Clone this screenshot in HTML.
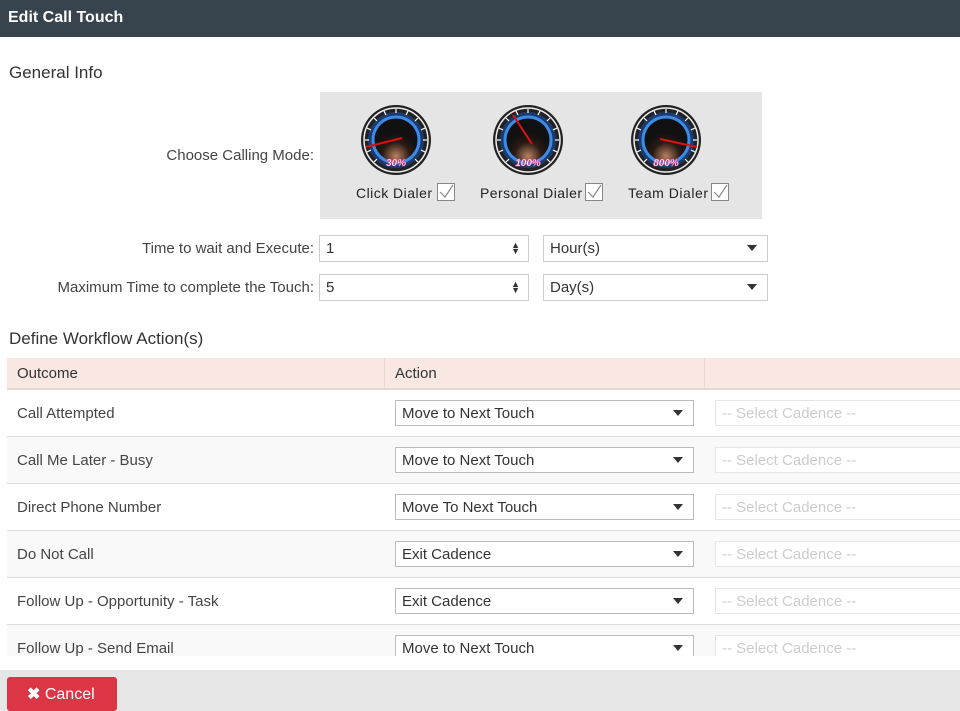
<!DOCTYPE html>
<html><head><meta charset="utf-8"><style>
*{margin:0;padding:0;box-sizing:border-box}
body{width:960px;height:711px;overflow:hidden;background:#fff;font-family:"Liberation Sans",sans-serif;color:#333;position:relative}
.a{position:absolute}
.hdr{left:0;top:0;width:960px;height:37px;background:#37444d;color:#fff;font-weight:bold;font-size:16px;padding:9px 8px}
.h{font-size:17px;color:#333}
.lbl{font-size:15px;color:#444;text-align:right}
.inp{border:1px solid #ccc;height:27px;font-size:15px;padding:4px 6px;background:#fff}
.arr{position:absolute;right:10px;top:9px;width:0;height:0;border-left:5px solid transparent;border-right:5px solid transparent;border-top:6px solid #333}
.spin{position:absolute;right:8px;top:6px;font-size:9px;line-height:6px;color:#333}
.row{position:absolute;left:7px;width:953px;height:47px;border-bottom:1px solid #ddd;font-size:15px;color:#444}
.row .t{position:absolute;left:10px;top:15px}
.sel{position:absolute;left:388px;top:10px;width:299px;height:26px;border:1px solid #bbb;background:#fff;padding:4px 6px;font-size:15px;color:#333}
.cad{position:absolute;left:708px;top:10px;width:250px;height:26px;border:1px solid #e6e6e6;background:#fff;padding:4px 6px;font-size:15px;color:#ccc}
</style></head><body>
<div class="a hdr">Edit Call Touch</div>
<div class="a h" style="left:9px;top:63px">General Info</div>
<div class="a lbl" style="left:0;width:314px;top:147px">Choose Calling Mode:</div>
<div class="a" style="left:320px;top:92px;width:442px;height:127px;background:#e5e5e5"></div>
<svg class="a" style="left:320px;top:92px" width="442" height="127">
<defs><radialGradient id="g" cx="50%" cy="85%" r="50%"><stop offset="0" stop-color="#b88060"/><stop offset="0.6" stop-color="#2a1a14"/><stop offset="1" stop-color="#111"/></radialGradient></defs>
<g id="gg" transform="translate(76,48)">
<circle r="35" fill="#222"/><circle r="32" fill="none" stroke="#eee" stroke-width="1.5"/>
<circle r="28" fill="#1c3a6e"/><circle r="23" fill="url(#g)" stroke="#3b8ce8" stroke-width="3"/>
<g stroke="#fff" stroke-width="1.2"><line x1="0" y1="-31" x2="0" y2="-27"/><line x1="22" y1="-22" x2="19" y2="-19"/><line x1="-22" y1="-22" x2="-19" y2="-19"/><line x1="31" y1="0" x2="27" y2="0"/><line x1="-31" y1="0" x2="-27" y2="0"/><line x1="22" y1="22" x2="19" y2="19"/><line x1="-22" y1="22" x2="-19" y2="19"/><line x1="12" y1="-29" x2="10" y2="-25"/><line x1="-12" y1="-29" x2="-10" y2="-25"/><line x1="29" y1="-12" x2="25" y2="-10"/><line x1="-29" y1="-12" x2="-25" y2="-10"/><line x1="29" y1="12" x2="25" y2="10"/><line x1="-29" y1="12" x2="-25" y2="10"/></g>
</g>
<use href="#gg" x="132"/><use href="#gg" x="270"/>
<line x1="82" y1="46" x2="46" y2="55" stroke="#e01010" stroke-width="2"/>
<line x1="212" y1="52" x2="193" y2="23" stroke="#e01010" stroke-width="2"/>
<line x1="340" y1="47" x2="377" y2="55" stroke="#e01010" stroke-width="2"/>
<g font-size="10" font-weight="bold" font-style="italic" fill="#fff" stroke="#ff4090" stroke-width="0.4" text-anchor="middle" font-family="Liberation Sans,sans-serif">
<text x="76" y="74">30%</text><text x="208" y="74">100%</text><text x="346" y="74">800%</text></g>
<g font-size="14" fill="#222" font-family="Liberation Sans,sans-serif"><text x="36" y="106" textLength="76">Click Dialer</text><text x="160" y="106" textLength="102">Personal Dialer</text><text x="308" y="106" textLength="80">Team Dialer</text></g>
<g fill="#fff" stroke="#888"><rect x="117.5" y="91.5" width="17" height="17"/><rect x="265.5" y="91.5" width="17" height="17"/><rect x="391.5" y="91.5" width="17" height="17"/></g>
<g fill="none" stroke="#888" stroke-width="1.2"><path d="M120 100l5 5 8-12"/><path d="M268 100l5 5 8-12"/><path d="M394 100l5 5 8-12"/></g>
</svg>
<div class="a lbl" style="left:0;width:314px;top:240px">Time to wait and Execute:</div>
<div class="a lbl" style="left:0;width:314px;top:279px">Maximum Time to complete the Touch:</div>
<div class="a inp" style="left:319px;top:235px;width:210px">1<span class="spin">▲<br>▼</span></div>
<div class="a inp" style="left:543px;top:235px;width:225px">Hour(s)<span class="arr"></span></div>
<div class="a inp" style="left:319px;top:274px;width:210px">5<span class="spin">▲<br>▼</span></div>
<div class="a inp" style="left:543px;top:274px;width:225px">Day(s)<span class="arr"></span></div>
<div class="a h" style="left:9px;top:329px">Define Workflow Action(s)</div>
<div class="a" style="left:7px;top:358px;width:953px;height:32px;background:#f8e8e1;border-bottom:2px solid #e2d8d3;font-size:15px;color:#333">
<span class="a" style="left:10px;top:7px">Outcome</span><span class="a" style="left:377px;top:0;height:30px;border-left:1px solid #e6dad4"></span><span class="a" style="left:388px;top:7px">Action</span><span class="a" style="left:697px;top:0;height:30px;border-left:1px solid #e6dad4"></span></div>
<div class="a" style="left:0;top:390px;width:960px;height:266px;overflow:hidden">
<div class="row" style="top:0;background:#fff"><span class="t">Call Attempted</span><div class="sel">Move to Next Touch<span class="arr"></span></div><div class="cad">-- Select Cadence --</div></div>
<div class="row" style="top:47px;background:#f9f9f9"><span class="t">Call Me Later - Busy</span><div class="sel">Move to Next Touch<span class="arr"></span></div><div class="cad">-- Select Cadence --</div></div>
<div class="row" style="top:94px;background:#fff"><span class="t">Direct Phone Number</span><div class="sel">Move To Next Touch<span class="arr"></span></div><div class="cad">-- Select Cadence --</div></div>
<div class="row" style="top:141px;background:#f9f9f9"><span class="t">Do Not Call</span><div class="sel">Exit Cadence<span class="arr"></span></div><div class="cad">-- Select Cadence --</div></div>
<div class="row" style="top:188px;background:#fff"><span class="t">Follow Up - Opportunity - Task</span><div class="sel">Exit Cadence<span class="arr"></span></div><div class="cad">-- Select Cadence --</div></div>
<div class="row" style="top:235px;background:#f9f9f9"><span class="t">Follow Up - Send Email</span><div class="sel">Move to Next Touch<span class="arr"></span></div><div class="cad">-- Select Cadence --</div></div>
</div>
<div class="a" style="left:0;top:670px;width:960px;height:41px;background:#e6e6e6"></div>
<div class="a" style="left:7px;top:677px;width:110px;height:34px;background:#dc3545;border-radius:3px;color:#fff;font-size:16px;padding:7px 0 0 20px"><b>✖</b> Cancel</div>
</body></html>
